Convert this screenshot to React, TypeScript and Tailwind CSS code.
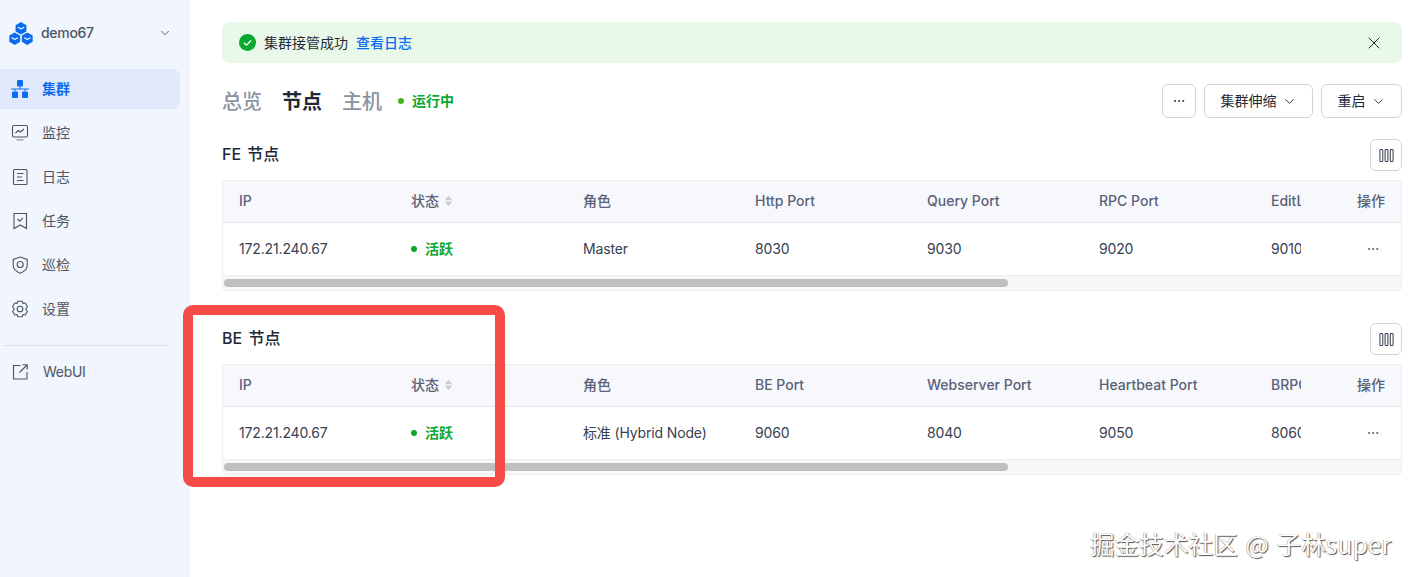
import { ChevronDown, Ellipsis, X } from "lucide-react";
import type { ReactNode } from "react";

const iconClass = "h-5 w-5 shrink-0";

const ClusterIcon = () => (
  <svg viewBox="0 0 20 20" className={iconClass} fill="#0b6cf0">
    <rect x="7" y="1" width="6" height="6.5" rx="1" />
    <rect x="2" y="12.5" width="6" height="6.5" rx="1" />
    <rect x="12" y="12.5" width="6" height="6.5" rx="1" />
    <path d="M9.5 7h1v2.5h8.5v1h-3.5v2h-1v-2h-9v2h-1v-2H1v-1h8.500z" />
  </svg>
);

const MonitorIcon = () => (
  <svg viewBox="0 0 20 20" className={iconClass} fill="none" stroke="#4b5563" strokeWidth="1.1">
    <rect x="2.500" y="2.500" width="15" height="11.500" rx="1.500" />
    <path d="M5.500 10l2.800-2.500 2.200 1.500 3.500-3" />
    <path d="M6.500 16.800h7" strokeWidth="1.500" stroke="#9ca3af" />
  </svg>
);

const LogIcon = () => (
  <svg viewBox="0 0 20 20" className={iconClass} fill="none" stroke="#4b5563" strokeWidth="1.1">
    <rect x="3.500" y="2.500" width="13.500" height="15" rx="1" />
    <path d="M7 6.500h6.500M7 10h5M7 13.500h6.500" />
  </svg>
);

const TaskIcon = () => (
  <svg viewBox="0 0 20 20" className={iconClass} fill="none" stroke="#4b5563" strokeWidth="1.1">
    <path d="M4 2.500h12.500v15l-6.250-3.500L4 17.500z" />
    <path d="M7.500 8l2.200 2.200 3.300-3.400" />
  </svg>
);

const ShieldIcon = () => (
  <svg viewBox="0 0 20 20" className={iconClass} fill="none" stroke="#4b5563" strokeWidth="1.1">
    <path d="M10.200 2l7 2.500v6c0 3.600-3.500 6.300-7 7.700-3.500-1.400-7-4.100-7-7.700v-6z" />
    <circle cx="10.200" cy="9.500" r="3" />
  </svg>
);

const GearIcon = () => (
  <svg viewBox="0 0 20 20" className={iconClass} fill="none" stroke="#4b5563" strokeWidth="1.1" strokeLinejoin="round">
    <path d="M7.800 2.200h4.400l.8 2.300 2.300-.5 2.200 3.700-1.600 1.800 0 1 1.600 1.800-2.200 3.700-2.300-.5-.8 2.300H7.800L7 15.500l-2.300.5-2.200-3.700 1.600-1.800v-1L2.500 7.700l2.200-3.700 2.300.5z" />
    <circle cx="10" cy="10" r="2.800" />
  </svg>
);

const LinkOutIcon = () => (
  <svg viewBox="0 0 20 20" className={iconClass} fill="none" stroke="#4b5563" strokeWidth="1.1">
    <path d="M10.500 3.500H3.500v13.500H17v-7" />
    <path d="M9.500 10.500L17 3M12.500 2.800h4.700v4.700" />
  </svg>
);

const Logo = () => (
  <svg viewBox="0.5 0 23 22" className="h-[23px] w-[24px]">
    {[
      [12, 6],
      [6, 16],
      [18, 16],
    ].map(([cx, cy]) => (
      <g key={`${cx}-${cy}`}>
        <path
          d={`M${cx} ${cy - 6}l5.200 3v6l-5.200 3-5.200-3v-6z`}
          fill="#0b6cf0"
        />
        <path
          d={`M${cx - 3} ${cy - 1}l3 1.700 3-1.700`}
          fill="none"
          stroke="#fff"
          strokeWidth="1"
        />
      </g>
    ))}
  </svg>
);

const ColumnsIcon = () => (
  <svg viewBox="0 0 16 16" className="h-[15px] w-[15px]" fill="none" stroke="#374151" strokeWidth="1.100">
    <rect x="1" y="1.500" width="3" height="13" rx="1" />
    <rect x="6.500" y="1.500" width="3" height="13" rx="1" />
    <rect x="12" y="1.500" width="3" height="13" rx="1" />
  </svg>
);

const SortIcon = () => (
  <svg viewBox="0 0 8 12" className="ml-[5px] h-[12px] w-[9px]" fill="#c5cad3">
    <path d="M4 1l3.800 4.200H.2zM4 11L.2 6.800h7.600z" />
  </svg>
);

const navItems: { label: string; icon: ReactNode; active?: boolean }[] = [
  { label: "集群", icon: <ClusterIcon />, active: true },
  { label: "监控", icon: <MonitorIcon /> },
  { label: "日志", icon: <LogIcon /> },
  { label: "任务", icon: <TaskIcon /> },
  { label: "巡检", icon: <ShieldIcon /> },
  { label: "设置", icon: <GearIcon /> },
];

const Sidebar = () => (
  <aside className="flex w-[190px] shrink-0 flex-col bg-[#f0f5fe]">
    <div className="flex h-[66px] items-center pl-[9px] pr-[18px]">
      <Logo />
      <span className="ml-2 flex-1 text-sm font-medium tracking-[-0.3px] text-[#4b5563]">demo67</span>
      <ChevronDown className="h-[14px] w-[14px] text-[#4b5563]" strokeWidth={1.5} />
    </div>
    <nav className="mt-[3px] flex flex-col gap-1">
      {navItems.map((item) => (
        <a
          key={item.label}
          className={
            item.active
              ? "flex h-10 w-[180px] items-center gap-[12px] rounded-r-lg bg-[#e0e9fc] pl-[10px] text-sm font-semibold text-[#0b6cf0]"
              : "flex h-10 w-[180px] items-center gap-[12px] pl-[10px] text-sm text-[#4b5563]"
          }
        >
          {item.icon}
          <span>{item.label}</span>
        </a>
      ))}
    </nav>
    <div className="ml-[3px] mt-[16px] w-[167px] border-t border-[#dfe3ec]" />
    <a className="mt-[6px] flex h-10 w-[180px] items-center gap-[13px] pl-[10px] text-sm tracking-[-0.3px] text-[#4b5563]">
      <LinkOutIcon />
      <span>WebUI</span>
    </a>
  </aside>
);

const Alert = () => (
  <div className="flex h-[41px] items-center rounded-lg bg-[#e8f9ea] pl-[17px] pr-[18px] text-sm text-[#1f2937]">
    <svg viewBox="0 0 18 18" className="h-[17px] w-[17px]">
      <circle cx="9" cy="9" r="9" fill="#0aa82f" />
      <path d="M5.200 9.200l2.700 2.600 4.900-5" fill="none" stroke="#fff" strokeWidth="1.400" />
    </svg>
    <span className="ml-2">集群接管成功</span>
    <a className="ml-2 font-medium text-[#0b6cf0]">查看日志</a>
    <X className="ml-auto h-5 w-5 text-[#1f2937]" strokeWidth={1.2} />
  </div>
);

const outlineButton = "flex h-[34px] items-center justify-center rounded-md border border-[#d1d5db] bg-white text-sm text-[#1f2937]";

const TabsRow = () => (
  <div className="mt-[21px] flex h-[34px] items-center">
    <div className="flex items-center gap-[20px] pt-[1px] text-xl font-medium">
      <span className="text-[#8b93a1]">总览</span>
      <span className="font-semibold text-[#1f2937]">节点</span>
      <span className="text-[#8b93a1]">主机</span>
    </div>
    <span className="ml-[16px] h-[6px] w-[6px] rounded-full bg-[#3fb51f]" />
    <span className="ml-[8px] text-sm font-semibold text-[#0aa82f]">运行中</span>
    <div className="ml-auto flex gap-2">
      <button className={`${outlineButton} w-[34px]`}>
        <Ellipsis className="h-[14px] w-[14px]" strokeWidth={1.5} />
      </button>
      <button className={`${outlineButton} w-[109px] gap-[5px]`}>
        集群伸缩
        <ChevronDown className="h-[15px] w-[15px]" strokeWidth={1.5} />
      </button>
      <button className={`${outlineButton} w-[81px] gap-[5px]`}>
        重启
        <ChevronDown className="h-[15px] w-[15px]" strokeWidth={1.5} />
      </button>
    </div>
  </div>
);

type Column = { title: string; value: ReactNode; sortable?: boolean };

const activeStatus = (
  <span className="flex items-center font-semibold tracking-normal text-[#0aa82f]">
    <span className="mr-[8px] h-[6px] w-[6px] rounded-full bg-[#0aa82f]" />
    活跃
  </span>
);

const feColumns: Column[] = [
  { title: "IP", value: "172.21.240.67" },
  { title: "状态", value: activeStatus, sortable: true },
  { title: "角色", value: "Master" },
  { title: "Http Port", value: "8030" },
  { title: "Query Port", value: "9030" },
  { title: "RPC Port", value: "9020" },
  { title: "EditLog Port", value: "9010" },
];

const beColumns: Column[] = [
  { title: "IP", value: "172.21.240.67" },
  { title: "状态", value: activeStatus, sortable: true },
  { title: "角色", value: "标准 (Hybrid Node)" },
  { title: "BE Port", value: "9060" },
  { title: "Webserver Port", value: "8040" },
  { title: "Heartbeat Port", value: "9050" },
  { title: "BRPC Port", value: "8060" },
];

const NodeTable = ({ title, columns }: { title: string; columns: Column[] }) => (
  <section>
    <div className="flex h-8 items-center justify-between">
      <h3 className="pb-[2px] text-base font-medium text-[#1f2937] [word-spacing:2px]">{title}</h3>
      <button className="flex h-8 w-8 items-center justify-center rounded-md border border-[#d1d5db]">
        <ColumnsIcon />
      </button>
    </div>
    <div className="mt-[9px] overflow-hidden rounded-sm border border-[#eceef2] text-sm">
      <div className="flex">
        <div className="min-w-0 flex-1 overflow-hidden">
          <div className="flex h-[42px] w-max items-center border-b border-[#e3e6eb] bg-[#f6f8fb] pb-[2px] font-medium text-[#59627a]">
            {columns.map((col) => (
              <div key={col.title} className="flex w-[172px] shrink-0 items-center whitespace-nowrap pl-4">
                {col.title}
                {col.sortable && <SortIcon />}
              </div>
            ))}
          </div>
          <div className="flex h-[53px] w-max items-center border-b border-[#e8eaee] tracking-[-0.15px] text-[#374151]">
            {columns.map((col) => (
              <div key={col.title} className="w-[172px] shrink-0 whitespace-nowrap pl-4">
                {col.value}
              </div>
            ))}
          </div>
        </div>
        <div className="w-[100px] shrink-0">
          <div className="flex h-[42px] items-center justify-end border-b border-[#e3e6eb] bg-[#f6f8fb] pb-[2px] pr-[16px] font-medium text-[#59627a]">
            操作
          </div>
          <div className="flex h-[53px] items-center justify-end border-b border-[#e8eaee] pr-[21px] text-[#4b5563]">
            <Ellipsis className="h-[14px] w-[14px]" strokeWidth={1.5} />
          </div>
        </div>
      </div>
      <div className="h-[14px] bg-[#f7f7f8] pl-[1px] pt-[3px]">
        <div className="h-2 w-[784px] rounded bg-[#bfbfbf]" />
      </div>
    </div>
  </section>
);

export default function App() {
  return (
    <div className="relative flex h-screen w-full overflow-hidden bg-white font-['Inter','Noto_Sans_CJK_SC',sans-serif]">
      <Sidebar />
      <main className="min-w-0 flex-1 pl-8 pr-[9px] pt-[22px]">
        <Alert />
        <TabsRow />
        <div className="mt-[21px] flex flex-col gap-[32px]">
          <NodeTable title="FE 节点" columns={feColumns} />
          <NodeTable title="BE 节点" columns={beColumns} />
        </div>
      </main>

      {/* annotation drawn over the page */}
      <div className="pointer-events-none absolute left-[183px] top-[305px] h-[182px] w-[322px] rounded-[10px] border-[10px] border-[#f64c46]" />
      <div className="pointer-events-none absolute left-[1090px] top-[526px] whitespace-nowrap font-['Noto_Sans_CJK_SC',sans-serif] text-[24.500px] leading-[36px] tracking-[0.15px] text-white [word-spacing:2px] [text-shadow:1px_1px_1px_#555,-0.5px_-0.5px_0.5px_#999]">
        掘金技术社区 @ 子林super
      </div>
    </div>
  );
}
